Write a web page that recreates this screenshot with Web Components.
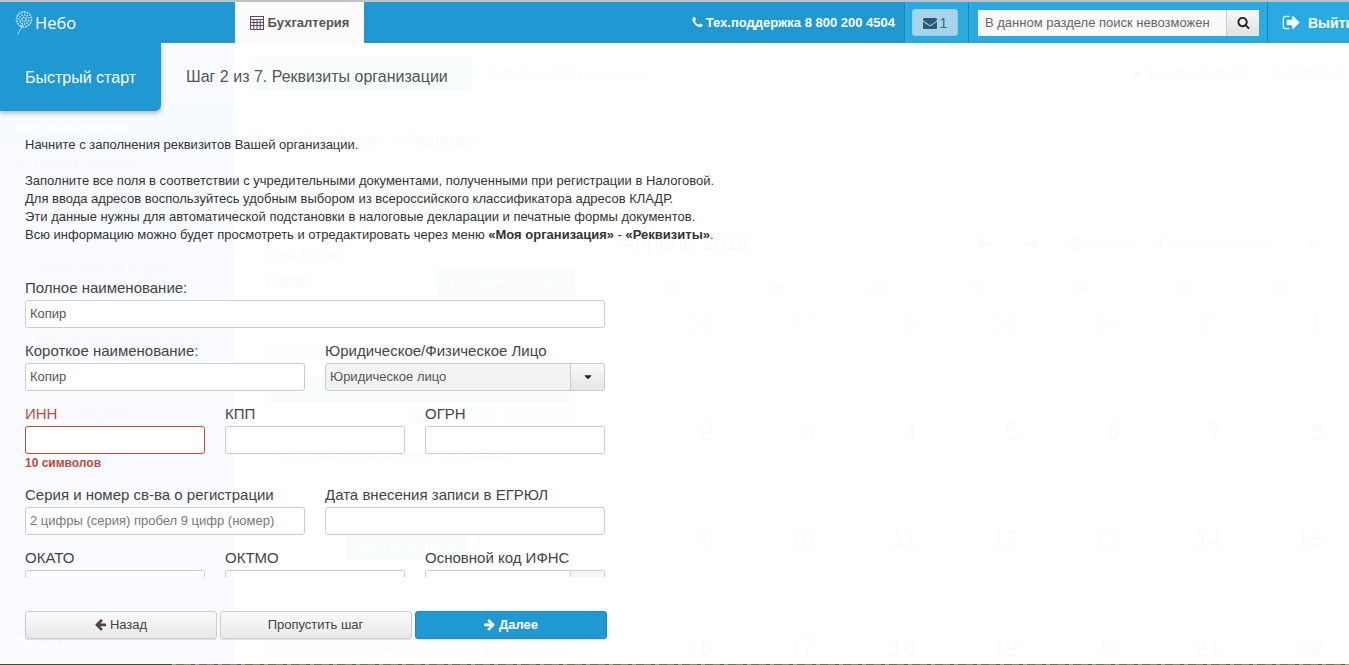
<!DOCTYPE html>
<html lang="ru"><head><meta charset="utf-8"><title>Небо</title>
<style>
html,body{margin:0;padding:0;height:665px;overflow:hidden;font-family:"Liberation Sans",Arial,sans-serif;color:#333}
html{background:#fff}
body{position:relative;border-top:2px solid #c2c2c2;box-sizing:border-box;background:linear-gradient(90deg,#45482a 0 171px,transparent 171px),repeating-linear-gradient(90deg,#8b8a58 0 7px,#5f6238 7px 11px,#a3a27a 11px 15px,#6f7146 15px 23px);background-color:#6f7146}
</style></head><body>
<app-topbar></app-topbar>
<ghost-page></ghost-page>
<wizard-overlay>
  <wiz-field slot="row1" label="Полное наименование:" value="Копир"></wiz-field>
  <wiz-field slot="row2" label="Короткое наименование:" value="Копир"></wiz-field>
  <wiz-field slot="row2" label="Юридическое/Физическое Лицо" value="Юридическое лицо" kind="select"></wiz-field>
  <wiz-field slot="row3" label="ИНН" error="10 символов"></wiz-field>
  <wiz-field slot="row3" label="КПП"></wiz-field>
  <wiz-field slot="row3" label="ОГРН"></wiz-field>
  <wiz-field slot="row4" label="Серия и номер св-ва о регистрации" placeholder="2 цифры (серия) пробел 9 цифр (номер)"></wiz-field>
  <wiz-field slot="row4" label="Дата внесения записи в ЕГРЮЛ"></wiz-field>
  <wiz-field slot="row5" label="ОКАТО"></wiz-field>
  <wiz-field slot="row5" label="ОКТМО"></wiz-field>
  <wiz-field slot="row5" label="Основной код ИФНС" kind="combo"></wiz-field>
</wizard-overlay>
<script>
const PATHS={
left:"M1664 896v128q0 53-32.5 90.5t-84.5 37.5h-704l293 294q38 36 38 90t-38 90l-75 76q-38 38-91 38-52 0-90-38l-651-652q-37-37-37-90 0-52 37-91l651-650q38-38 90-38 52 0 90 38l75 74q38 38 38 91t-38 91l-293 293h704q52 0 84.5 37.5t32.5 90.5z",
right:"M1600 960q0 54-37 91l-651 651q-39 37-91 37-51 0-90-37l-75-75q-38-38-38-91t38-91l293-293h-704q-52 0-84.5-37.5t-32.5-90.5v-128q0-53 32.5-90.5t84.5-37.5h704l-293-294q-38-36-38-90t38-90l75-75q38-38 90-38 52 0 91 38l651 651q37 35 37 90z",
mail:"M1792 710v794q0 66-47 113t-113 47h-1472q-66 0-113-47t-47-113v-794q44 49 101 87 362 246 497 345 57 42 92.5 65.5t94.5 48 110 24.5h2q51 0 110-24.5t94.5-48 92.5-65.5q170-123 498-345 57-39 100-87zm0-294q0 79-49 151t-122 123q-376 261-468 325-10 7-42.5 30.5t-54 38-52 32.5-57.5 27-50 9h-2q-23 0-50-9t-57.5-27-52-32.5-54-38-42.5-30.5q-91-64-262-182.5t-205-142.5q-62-42-117-115.5t-55-136.5q0-78 41.5-130t118.5-52h1472q65 0 112.5 47t47.5 113z",
search:"M1216 832q0-185-131.5-316.5t-316.5-131.5-316.5 131.5-131.5 316.5 131.5 316.5 316.5 131.5 316.5-131.5 131.5-316.5zm512 832q0 52-38 90t-90 38q-54 0-90-38l-343-342q-179 124-399 124-143 0-273.5-55.5t-225-150-150-225-55.5-273.5 55.5-273.5 150-225 225-150 273.5-55.5 273.5 55.5 225 150 150 225 55.5 273.5q0 220-124 399l343 343q37 37 37 90z",
phone:"M1600 1240q0 27-10 70.5t-21 68.5q-21 50-122 106-94 51-186 51-27 0-53-3.5t-57.5-12.5-47-14.5-55.5-20.5-49-18q-98-35-175-83-127-79-264-216t-216-264q-48-77-83-175-3-9-18-49t-20.5-55.5-14.5-47-12.5-57.5-3.5-53q0-92 51-186 56-101 106-122 25-11 68.5-21t70.5-10q14 0 21 3 18 6 53 76 11 19 30 54t35 63.5 31 53.5q3 4 17.5 25t21.5 35.5 7 28.5q0 20-28.5 50t-62 55-62 53-28.5 46q0 9 5 22.5t8.5 20.5 14 24 11.5 19q76 137 174 235t235 174q2 1 19 11.5t24 14 20.5 8.5 22.5 5q18 0 46-28.5t53-62 55-62 50-28.5q14 0 28.5 7t35.5 21.5 25 17.5q25 15 53.5 31t63.5 35 54 30q70 35 76 53 3 7 3 21z",
out:"M704 1440q0 4 1 20t.5 26.5-3 23.5-10 19.5-20.5 6.5h-320q-119 0-203.5-84.5t-84.5-203.5v-704q0-119 84.5-203.5t203.5-84.5h320q13 0 22.5 9.5t9.5 22.5q0 4 1 20t.5 26.5-3 23.5-10 19.5-20.5 6.5h-320q-66 0-113 47t-47 113v704q0 66 47 113t113 47h312l11.5 1 11.5 3 8 5.5 7 9 2 13.5zm928-544q0 26-19 45l-544 544q-19 19-45 19t-45-19-19-45v-288h-448q-26 0-45-19t-19-45v-384q0-26 19-45t45-19h448v-288q0-26 19-45t45-19 45 19l544 544q19 19 19 45z",
caret:"M1408 704q0 26-19 45l-448 448q-19 19-45 19t-45-19l-448-448q-19-19-19-45t19-45 45-19h896q26 0 45 19t19 45z"};
class UiIcon extends HTMLElement{connectedCallback(){
  const s=this.getAttribute('size')||14,n=this.getAttribute('name');
  this.attachShadow({mode:'open'}).innerHTML=`<style>:host{display:inline-flex;align-items:center;flex:none;line-height:0}svg{display:block;fill:currentColor}</style><svg width="${s}" height="${s}" viewBox="0 0 1792 1792"><path d="${PATHS[n]}"/></svg>`;
}}
customElements.define('ui-icon',UiIcon);

const seeds=[];for(let r=3.5;r<=12;r+=4.2){const c=r<4?6:r<8?11:16;for(let i=0;i<c;i++){const a=i/c*6.283+r;seeds.push(`<circle cx="${(15+r*Math.cos(a)).toFixed(1)}" cy="${(14+r*Math.sin(a)).toFixed(1)}" r="1.35"/>`)}}
class AppTopbar extends HTMLElement{connectedCallback(){
 this.attachShadow({mode:'open'}).innerHTML=`<style>
 :host{display:flex;height:41px;background:#2098d1;color:#fff;font-family:"Liberation Sans",Arial,sans-serif;position:relative;z-index:3;overflow:hidden;white-space:nowrap}
 .logo{width:235px;flex:none;display:flex;align-items:center;padding-left:15px;box-sizing:border-box;gap:2px}
 .logo svg{margin-top:1px}
 .logo span{font:400 16.5px "Open Sans",sans-serif;color:#fff}
 .tab{width:129px;flex:none;background:#fcfcfc;color:#555;display:flex;align-items:center;justify-content:center;gap:4px;font-weight:700;font-size:13px}
 .sp{flex:1}
 .phone{display:flex;align-items:center;gap:2px;font-weight:700;font-size:13px;padding-right:9px}
 .right{flex:none;width:445px;background:#29abe2;display:flex;align-items:center;border-left:1px solid #1d87ba;box-sizing:border-box}
 .right>*{flex:none}
 .msg{margin-left:7px;width:46px;height:27px;border-radius:3px;background:#a6d4ea;border:1px solid #9accE4;box-sizing:border-box;display:flex;align-items:center;justify-content:center;gap:3px;color:#3c6a86;font-size:14px}
 .msg ui-icon{color:#2b5a78}
 .div{width:1px;height:41px;background:#1d87ba;margin-left:10px}
 .search{margin-left:9px;display:flex;height:26px;width:281px}
 .search .i{width:248px;background:#f9f9f9;color:#666;font-size:13px;line-height:26px;padding-left:7px;box-sizing:border-box}
 .search .b{width:33px;background:linear-gradient(#f8f8f8,#e2e2e2);border-left:1px solid #ccc;box-sizing:border-box;display:flex;align-items:center;justify-content:center;color:#222}
 .out{margin-left:14px;display:flex;align-items:center;gap:7px;font-weight:700;font-size:14px}
 </style>
 <div class="logo"><svg width="18" height="24" viewBox="0 0 30 40" fill="#dff1fa"><g>${seeds.join('')}</g><circle cx="15" cy="14" r="13.4" fill="none" stroke="#cfeaf6" stroke-width=".8"/><path d="M13 22 Q10 31 4 39.5" fill="none" stroke="#dff1fa" stroke-width="1.3"/></svg><span>Небо</span></div>
 <div class="tab"><svg width="14" height="14" viewBox="0 0 14 14" fill="none" stroke="#5c4a60" stroke-width="1"><rect x=".5" y=".5" width="13" height="13"/><path d="M.5 3.5h13M.5 6.5h13M.5 9.5h13M3.8 3.5v10M7 3.5v10M10.2 3.5v10"/></svg>Бухгалтерия</div>
 <div class="sp"></div>
 <div class="phone"><ui-icon name="phone" size="13"></ui-icon>Тех.поддержка 8 800 200 4504</div>
 <div class="right"><div class="msg"><ui-icon name="mail" size="14"></ui-icon>1</div><div class="div"></div>
 <div class="search"><div class="i">В данном разделе поиск невозможен</div><div class="b"><ui-icon name="search" size="13"></ui-icon></div></div>
 <div class="div" style="margin-left:8px"></div>
 <div class="out"><ui-icon name="out" size="19"></ui-icon>Выйти</div></div>`;
}}
customElements.define('app-topbar',AppTopbar);

class GhostPage extends HTMLElement{connectedCallback(){
 const days=['Пн','Вт','Ср','Чт','Пт','Сб','Вс'].map(d=>`<div class="dh">${d}</div>`).join('');
 const rows=[[26,27,28,29,30,31,1],[2,3,4,5,6,7,8],[9,10,11,12,13,14,15],[16,17,18,19,20,21,22]].map((r,ri)=>r.map(n=>`<div class="dn ${ri==0&&n>1?'old':''}">${n}</div>`).join('')).join('');
 this.attachShadow({mode:'open'}).innerHTML=`<style>
 :host{display:grid;grid-template-columns:235px 1fr;height:621px;overflow:hidden;background:#fff;color:#777;font-family:"Liberation Sans",Arial,sans-serif;font-size:14px;white-space:nowrap}
 aside{background:#6f9fd8;color:#23507a;padding-top:62px;box-sizing:border-box}
 .side-tab{height:40px;background:#1f9fc0;color:#fff;line-height:44px;padding-left:15px;box-sizing:border-box;margin-bottom:8px}
 .side-i{padding-left:36px;line-height:20px}
 .side-i.first{padding-left:19px;display:flex;gap:7px}
 .side-i.first i{font-style:normal;font-size:10px}
 .side-i.a{margin-top:87px}.side-i.b{margin-top:52px}.side-i.c{margin-top:52px}
 .side-i.d{margin-top:209px;padding-left:16px;color:#fff}
 main{display:flex;flex-direction:column;min-width:0}
 .hd{display:flex;align-items:center;padding:14px 0 0 15px;height:47px;box-sizing:border-box;font-size:15px}
 .pr{width:223px;height:33px;background:#7cc4bc;margin-right:14px}
 .hd .sp{flex:1}.hd .q{font-size:14.5px;margin-right:23px}.hd .q2{font-size:14px;margin-right:5px;display:flex;align-items:center;gap:5px}
 .q2 svg{display:block}
 .crumb{font-size:18px;padding:38px 0 0 15px;line-height:24px}
 .cols{display:flex;margin-top:94px}
 .l{width:309px;margin-left:31px;flex:none}
 .money{display:flex;align-items:center;justify-content:space-between;margin-top:6px;font-size:17px;font-weight:700}
 .money b{font-size:13px;width:138px;height:27px;background:#5cc09a;color:#fff;text-align:center;line-height:27px;font-weight:400}
 .ost{margin-top:48px;line-height:16px}
 .gbox{height:26px;background:#7cd;margin:17px 0 6px}
 .dv{text-align:right;line-height:16px}
 .chk{margin:23px 0 0 9px;line-height:16px}
 .yr{display:flex;align-items:center;margin:71px 0 0 80px;gap:8px}
 .yr b{width:121px;height:26px;background:#5cc09a;color:#fff;font-weight:400;text-align:center;line-height:26px}
 .mode{margin-top:81px;line-height:16px}
 .c{flex:1;margin-left:45px;min-width:0}
 .ct{display:flex;align-items:center;height:24px;margin-top:-15px;font-size:22px}
 .ct .t{flex:1}
 .ct span{font-size:13px;flex:none;display:inline-flex;align-items:center;gap:3px}
 .ct ui-icon{flex:none}
 .grid{display:grid;grid-template-columns:repeat(7,101.7px);margin-left:-8.5px}
 .dh{text-align:right;padding-right:31px;margin-top:26px;height:29px;font-size:13px}
 .dn{text-align:right;font-size:24px;height:108px;box-sizing:border-box;color:#888}
 .dn.old{color:#ccc}
 </style>
 <aside><div class="side-tab">Мои организации</div><div class="side-i first"><i>▶</i>Личный кабинет</div><div class="side-i a">Электронные подписи</div><div class="side-i b">Показатели деятельности</div><div class="side-i c">Задачи</div><div class="side-i d">Запасы</div></aside>
 <main>
  <div class="hd"><div class="pr"></div><div>Активируйте промокод</div><div class="sp"></div><div class="q">★ Быстрый старт</div><div class="q2"><svg width="13" height="13" viewBox="0 0 13 13" fill="none" stroke="currentColor"><rect x="1.5" y="1.5" width="10" height="10" rx="3"/></svg>Справка</div></div>
  <div class="crumb">Личный кабинет » Главная</div>
  <div class="cols"><div class="l"><div>Ваш баланс:</div><div class="money">0,00₽<b>Пополнить баланс</b></div><div class="ost">Остаток</div><div class="gbox"></div><div class="dv">Действует до: 04.05.2018</div><div class="chk">Проверить подключение к сервисам</div><div class="yr"><b>Год » отчетность</b>?</div><div class="mode">Переключение между режимами интерфейса</div></div>
  <div class="c"><div class="ct"><div class="t">Апрель 2018</div><ui-icon name="left" size="14"></ui-icon><ui-icon name="right" size="14" style="margin-left:35px"></ui-icon><span style="margin-left:29px"><svg width="13" height="13" viewBox="0 0 13 13" fill="none" stroke="currentColor"><rect x="1.5" y="2.5" width="10" height="9" rx="1"/><path d="M1.5 5h10"/></svg>Сегодня</span><span style="margin-left:22px"><svg width="10" height="13" viewBox="0 0 10 13" fill="currentColor"><path d="M0 2h10L6 7v5L4 10.500V7z"/></svg>Фильтр событий</span><span style="margin-left:39px;margin-right:32px">↻</span></div>
  <div class="grid">${days}${rows}</div></div></div>
 </main>`;
}}
customElements.define('ghost-page',GhostPage);

class WizField extends HTMLElement{connectedCallback(){
 const g=n=>this.getAttribute(n),kind=g('kind'),err=g('error');
 const txt=g('value')||'',ph=g('placeholder')||'';
 let ctrl;
 if(kind==='select')ctrl=`<div class="ctl sel"><div class="v">${txt}</div><div class="ar"><ui-icon name="caret" size="12"></ui-icon></div></div>`;
 else if(kind==='combo')ctrl=`<div class="ctl combo"><div class="v"></div><div class="ar"></div></div>`;
 else ctrl=`<div class="ctl"><div class="v ${ph?'ph':''}">${txt||ph}</div></div>`;
 this.attachShadow({mode:'open'}).innerHTML=`<style>
 :host{display:block;min-width:0;margin-bottom:14px}
 label{display:block;font-size:15px;line-height:18px;height:18px;margin-bottom:3px;color:#444;white-space:nowrap}
 .ctl{display:flex;height:28px;border:1px solid #ccc;border-radius:3px;box-sizing:border-box;background:#fff;overflow:hidden;font-size:13px;color:#555}
 .v{flex:1;padding-left:4px;line-height:26px;white-space:nowrap;overflow:hidden}
 .ph{color:#777}
 .sel{background:#f3f3f3}
 .ar{width:33px;flex:none;border-left:1px solid #ccc;background:linear-gradient(#fafafa,#e6e6e6);display:flex;align-items:center;justify-content:center;color:#222}
 .combo .ar{background:#f5f5f5}
 :host([error]) label{color:#b94a48}
 :host([error]) .ctl{border-color:#b94a48}
 .e{color:#b94a48;font-weight:700;font-size:12px;line-height:14px;margin:2px 0 2px}
 </style><label>${g('label')}</label>${ctrl}${err?`<div class="e">${err}</div>`:''}`;
}}
customElements.define('wiz-field',WizField);

class WizBtn extends HTMLElement{connectedCallback(){
 this.attachShadow({mode:'open'}).innerHTML=`<style>
 :host{display:flex;align-items:center;justify-content:center;gap:3px;height:28px;width:192px;box-sizing:border-box;border:1px solid #ccc;border-radius:3px;background:linear-gradient(#fafafa,#e8e8e8);color:#444;font-size:13px;box-shadow:0 1px 1px rgba(0,0,0,.12);padding:0 1px 2px 0}
 :host([primary]){background:#2098d1;border-color:#1c88bc;color:#fff;font-weight:700}
 </style><slot></slot>`;
}}
customElements.define('wiz-btn',WizBtn);

class WizardOverlay extends HTMLElement{connectedCallback(){
 this.attachShadow({mode:'open'}).innerHTML=`<style>
 :host{position:absolute;left:0;right:0;top:41px;bottom:1px;background:rgba(255,255,255,.96);z-index:2;display:flex;flex-direction:column;font-family:"Liberation Sans",Arial,sans-serif;color:#333}
 header{display:flex;align-items:center;height:68px;flex:none}
 .qs{width:161px;height:68px;background:#2098d1;color:#fff;font-size:16px;display:flex;align-items:center;justify-content:center;border-radius:0 0 6px 0;box-shadow:0 2px 5px rgba(0,0,0,.3);box-sizing:border-box;padding-top:1px}
 .st{margin-left:25px;font-size:16px;color:#555}
 .body{height:466px;overflow:hidden;padding:25px 0 0 25px;box-sizing:border-box}
 p{margin:0 0 18px;font-size:13px;line-height:18px;color:#333;white-space:nowrap}
 .intro{height:143px}
 .form{width:580px}
 .r{display:grid;column-gap:20px}
 .r1{grid-template-columns:1fr}.r2{grid-template-columns:1fr 1fr}.r3{grid-template-columns:repeat(3,1fr)}
 footer{display:flex;gap:3px;padding:34px 0 0 25px}
 </style>
 <header><div class="qs">Быстрый старт</div><div class="st">Шаг 2 из 7. Реквизиты организации</div></header>
 <div class="body"><div class="intro"><p>Начните с заполнения реквизитов Вашей организации.</p>
 <p>Заполните все поля в соответствии с учредительными документами, полученными при регистрации в Налоговой.<br>Для ввода адресов воспользуйтесь удобным выбором из всероссийского классификатора адресов КЛАДР.<br>Эти данные нужны для автоматической подстановки в налоговые декларации и печатные формы документов.<br>Всю информацию можно будет просмотреть и отредактировать через меню <b>«Моя организация»</b> - <b>«Реквизиты»</b>.</p></div>
 <div class="form"><div class="r r1"><slot name="row1"></slot></div><div class="r r2"><slot name="row2"></slot></div><div class="r r3"><slot name="row3"></slot></div><div class="r r2"><slot name="row4"></slot></div><div class="r r3"><slot name="row5"></slot></div></div></div>
 <footer><wiz-btn><ui-icon name="left" size="13"></ui-icon>Назад</wiz-btn><wiz-btn>Пропустить шаг</wiz-btn><wiz-btn primary><ui-icon name="right" size="13"></ui-icon>Далее</wiz-btn></footer>`;
}}
customElements.define('wizard-overlay',WizardOverlay);
</script>
</body></html>
